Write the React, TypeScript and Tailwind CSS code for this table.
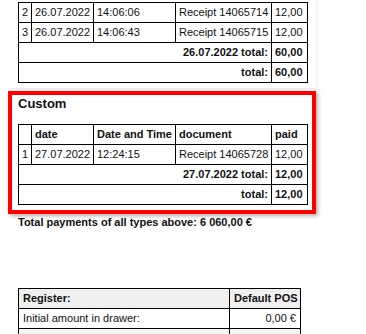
const cell = "border border-black px-[3px] py-[3px] leading-[13px]";

type Row = { n: number; date: string; time: string; doc: string; paid: string };

function Cols() {
  return (
    <colgroup>
      <col className="w-[13px]" />
      <col className="w-[62px]" />
      <col className="w-[82px]" />
      <col className="w-[96px]" />
      <col className="w-[36px]" />
    </colgroup>
  );
}

function Rows({ rows, day, dayTotal, total }: { rows: Row[]; day: string; dayTotal: string; total: string }) {
  return (
    <tbody>
      {rows.map((r) => (
        <tr key={r.n}>
          <td className={cell}>{r.n}</td>
          <td className={cell}>{r.date}</td>
          <td className={cell}>{r.time}</td>
          <td className={cell + " whitespace-nowrap"}>{r.doc}</td>
          <td className={cell}>{r.paid}</td>
        </tr>
      ))}
      <tr className="font-bold">
        <td colSpan={4} className={cell + " text-right"}>{day} total:</td>
        <td className={cell}>{dayTotal}</td>
      </tr>
      <tr className="font-bold">
        <td colSpan={4} className={cell + " text-right"}>total:</td>
        <td className={cell}>{total}</td>
      </tr>
    </tbody>
  );
}

export default function App() {
  return (
    <div className="h-[334px] w-[366px] overflow-hidden bg-white text-[#111] font-['Liberation_Sans',Arial,sans-serif]">
      {/* previous payment type, scrolled past its heading */}
      <div className="mx-[8px] mt-[-10px] w-[308px] pt-[12px] pb-[5px] pl-[10px] shadow-[1px_2px_2px_rgba(0,0,0,0.08)]">
        <table className="w-[289px] table-fixed border-collapse text-[11px]">
          <Cols />
          <Rows
            rows={[
              { n: 2, date: "26.07.2022", time: "14:06:06", doc: "Receipt 14065714", paid: "12,00" },
              { n: 3, date: "26.07.2022", time: "14:06:43", doc: "Receipt 14065715", paid: "12,00" },
            ]}
            day="26.07.2022"
            dayTotal="60,00"
            total="60,00"
          />
        </table>
      </div>

      <div className="mx-[8px] mt-[3px] w-[308px] border-4 border-[#ff0000] pt-[1px] pr-[5px] pb-[5px] pl-[6px] shadow-[2px_2px_4px_rgba(0,0,0,0.3)]">
        <h3 className="text-[13px] font-bold leading-[15px]">Custom</h3>
        <table className="mt-[13px] w-[289px] table-fixed border-collapse text-[11px]">
          <Cols />
          <thead>
            <tr className="font-bold text-left">
              <th className={cell}></th>
              <th className={cell}>date</th>
              <th className={cell}>Date and Time</th>
              <th className={cell}>document</th>
              <th className={cell}>paid</th>
            </tr>
          </thead>
          <Rows
            rows={[{ n: 1, date: "27.07.2022", time: "12:24:15", doc: "Receipt 14065728", paid: "12,00" }]}
            day="27.07.2022"
            dayTotal="12,00"
            total="12,00"
          />
        </table>
      </div>

      <p className="ml-[18px] mt-[2px] text-[11px] font-bold leading-[13px]">
        Total payments of all types above: 6 060,00 €
      </p>

      <table className="ml-[18px] mt-[59px] w-[282px] table-fixed border-collapse text-[11px]">
        <colgroup>
          <col className="w-[211px]" />
          <col className="w-[71px]" />
        </colgroup>
        <tbody>
          <tr className="bg-[#efefef] font-bold">
            <td className="border border-black px-[4px] py-[3px] leading-[13px]">Register:</td>
            <td className="border border-black px-[4px] py-[3px] leading-[13px] whitespace-nowrap">Default POS</td>
          </tr>
          <tr>
            <td className="border border-black px-[4px] py-[3px] leading-[13px]">Initial amount in drawer:</td>
            <td className="border border-black px-[4px] py-[3px] leading-[13px] text-right">0,00 €</td>
          </tr>
          <tr className="bg-[#f5f5f5]">
            <td className="h-[20px] border border-black"></td>
            <td className="h-[20px] border border-black"></td>
          </tr>
        </tbody>
      </table>
    </div>
  );
}
